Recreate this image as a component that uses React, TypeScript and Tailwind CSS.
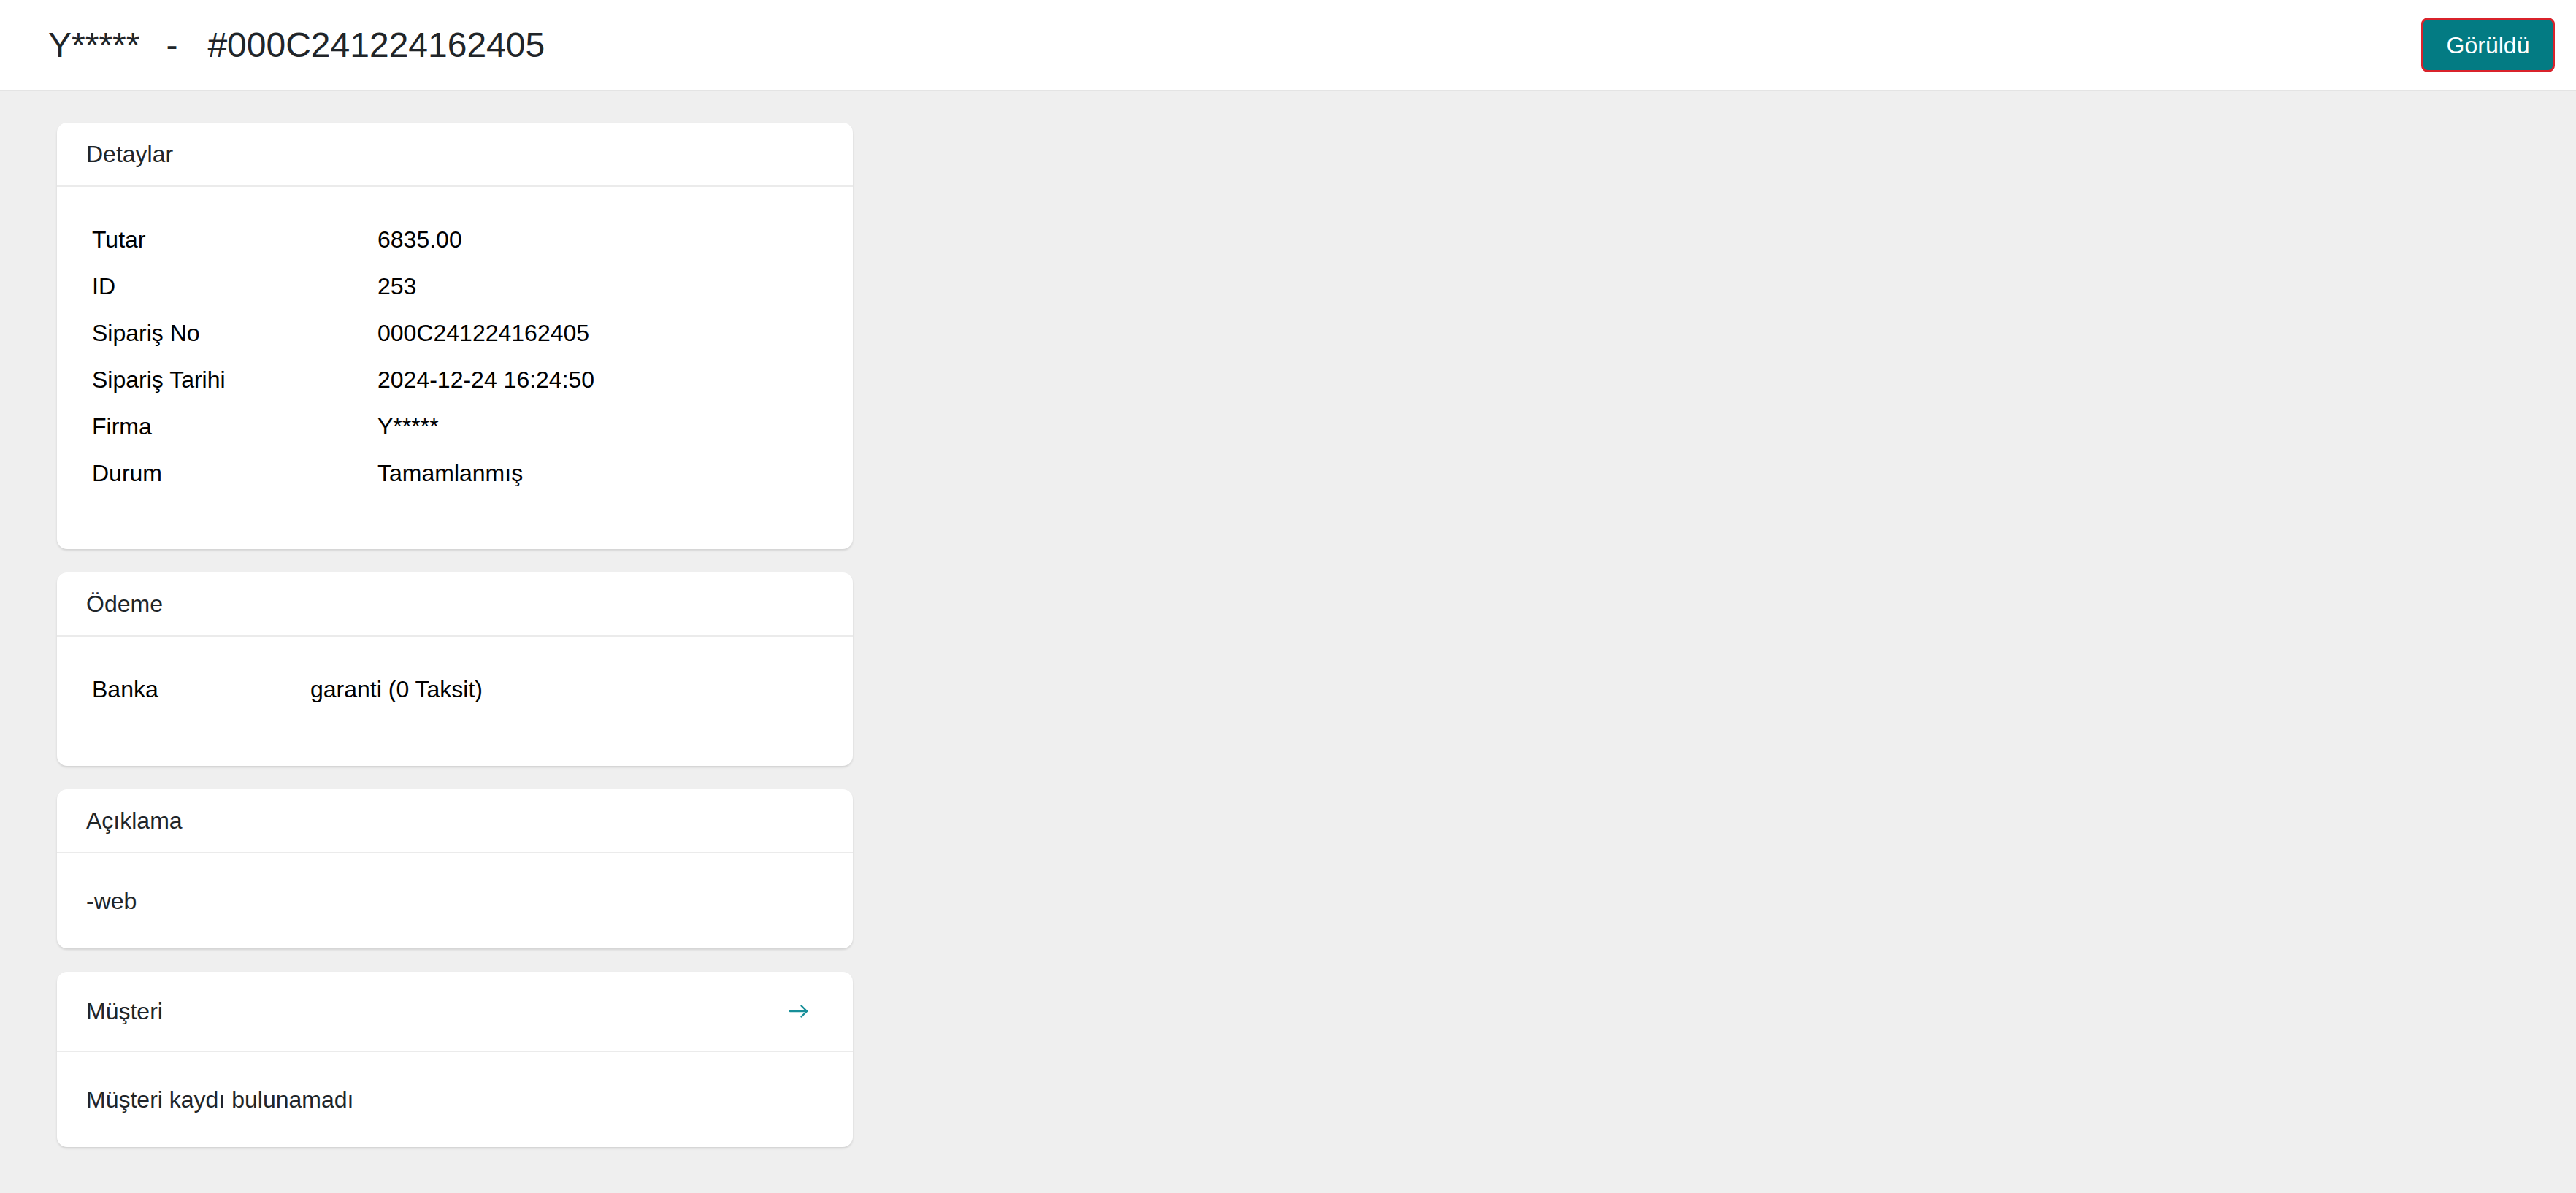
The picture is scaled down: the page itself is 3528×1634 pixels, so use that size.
import React from 'react';

const font = { fontFamily: '"Liberation Sans", Arial, Helvetica, sans-serif' };

const ArrowIcon = () => (
    <svg width="28" height="20" viewBox="0 0 28 20" fill="none" stroke="#178f99" strokeWidth="2.4" strokeLinecap="round" strokeLinejoin="round">
        <path d="M2 10h23" />
        <path d="M17.5 2.5 25 10l-7.5 7.5" />
    </svg>
);

// Kart başlığı + gövde
const Card = ({ title, action, children, bodyClass }: { title: string; action?: React.ReactNode; children: React.ReactNode; bodyClass?: string }) => (
    <div className="w-[1090px] bg-white rounded-[14px] shadow-[0_2px_3px_rgba(0,0,0,0.12)]">
        <div className={`flex items-center justify-between px-10 border-b-2 border-[#ebebeb] ${action ? 'h-[110px]' : 'h-[88px]'}`}>
            <span className="text-[32px] leading-[48px] text-[#212529]">{title}</span>
            {action}
        </div>
        <div className={bodyClass ?? 'px-10 py-[41px]'}>{children}</div>
    </div>
);

const InfoTable = ({ rows, labelWidth }: { rows: [string, string][]; labelWidth: string }) => (
    <table className="border-collapse text-[32px] text-black">
        <tbody>
            {rows.map(([label, value]) => (
                <tr key={label} className="h-[64px]">
                    <td className={`px-2 align-middle ${labelWidth}`}>{label}</td>
                    <td className="px-2 align-middle">{value}</td>
                </tr>
            ))}
        </tbody>
    </table>
);

export default function App() {
    const detaylar: [string, string][] = [
        ['Tutar', '6835.00'],
        ['ID', '253'],
        ['Sipariş No', '000C241224162405'],
        ['Sipariş Tarihi', '2024-12-24 16:24:50'],
        ['Firma', 'Y*****'],
        ['Durum', 'Tamamlanmış'],
    ];

    return (
        <div className="min-h-screen bg-[#efefef]" style={font}>
            {/* Üst bar */}
            <header className="h-[124px] bg-white border-b border-[#e4e4e4] flex items-center justify-between pl-[66px] pr-[29px]">
                <h1 className="text-[48px] text-[#212529] flex items-center">
                    <span>Y*****</span>
                    <span className="ml-[36px] mr-[41px]">-</span>
                    <span>#000C241224162405</span>
                </h1>
                <button className="w-[183px] h-[75px] rounded-[9px] border-[3px] border-[#d9232b] bg-[#037b83] text-white text-[32px]">
                    Görüldü
                </button>
            </header>

            <main className="pl-[78px] pt-[44px] pb-10 flex flex-col gap-8">
                <Card title="Detaylar" bodyClass="px-10 pt-10 pb-[72px]">
                    <InfoTable rows={detaylar} labelWidth="w-[391px]" />
                </Card>

                <Card title="Ödeme" bodyClass="px-10 pt-10 pb-[73px]">
                    <InfoTable rows={[['Banka', 'garanti (0 Taksit)']]} labelWidth="w-[299px]" />
                </Card>

                <Card title="Açıklama">
                    <p className="text-[32px] leading-[48px] text-[#212529]">-web</p>
                </Card>

                <Card
                    title="Müşteri"
                    action={
                        <button className="px-5 py-3 flex items-center">
                            <ArrowIcon />
                        </button>
                    }
                >
                    <p className="text-[32px] leading-[48px] text-[#212529]">Müşteri kaydı bulunamadı</p>
                </Card>
            </main>
        </div>
    );
}
